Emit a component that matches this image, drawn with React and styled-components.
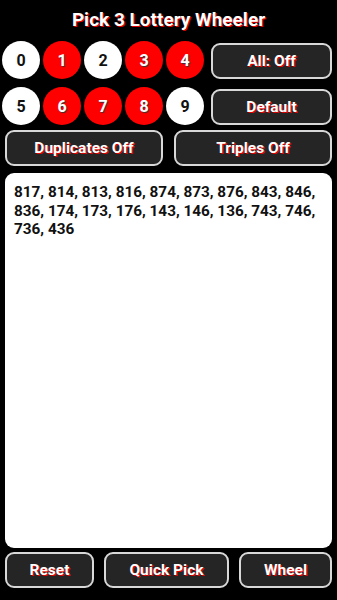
import React from 'react';
import styled, { createGlobalStyle } from 'styled-components';

const GlobalStyle = createGlobalStyle`
  html, body {
    margin: 0;
    padding: 0;
    background: #000;
  }
  body {
    font-family: Roboto, 'Liberation Sans', sans-serif;
  }
`;

const Screen = styled.div`
  width: 337px;
  height: 600px;
  background: #000;
  display: flex;
  flex-direction: column;
  box-sizing: border-box;
  padding: 0 5px 12px 5px;
`;

const Title = styled.h1`
  margin: 0;
  height: 41px;
  line-height: 40px;
  text-align: center;
  font-size: 19px;
  font-weight: 700;
  color: #fff;
  text-shadow: 1px 1px 0 #e00000;
`;

const PickArea = styled.div`
  display: grid;
  grid-template-columns: 202px 1fr;
  column-gap: 7px;
  row-gap: 8px;
  margin-left: -3px;
`;

const BallRow = styled.div`
  display: flex;
  gap: 3px;
  align-items: center;
`;

const Ball = styled.div`
  width: 38px;
  height: 38px;
  border-radius: 50%;
  display: flex;
  align-items: center;
  justify-content: center;
  font-size: 16px;
  font-weight: 700;
  background: ${({ picked }) => (picked ? '#ff0000' : '#fff')};
  color: ${({ picked }) => (picked ? '#fff' : '#111')};
  text-shadow: ${({ picked }) => (picked ? '1px 1px 1px #333' : 'none')};
`;

const Button = styled.button`
  height: 36px;
  box-sizing: border-box;
  border: 2px solid #d8d8d8;
  border-radius: 9px;
  background: #252525;
  color: #fff;
  font-family: Roboto, 'Liberation Sans', sans-serif;
  font-size: 15.5px;
  font-weight: 700;
  text-shadow: 1px 1px 0 #e00000;
  padding: 0;
  cursor: pointer;
`;

const SideButton = styled(Button)`
  align-self: center;
  margin-top: ${({ top }) => top || 0}px;
`;

const OptionRow = styled.div`
  display: grid;
  grid-template-columns: 158px 158px;
  justify-content: space-between;
  margin-top: 5px;
`;

const Results = styled.div`
  flex: 1;
  margin-top: 7px;
  background: #fff;
  border-radius: 9px;
  padding: 10px 9px;
  font-size: 15.3px;
  font-weight: 700;
  line-height: 18.7px;
  color: #111;
`;

const ActionRow = styled.div`
  display: grid;
  grid-template-columns: 89px 125px 93px;
  justify-content: space-between;
  margin-top: 4px;
`;

const rows = [
  [0, 1, 2, 3, 4],
  [5, 6, 7, 8, 9],
];
const picked = [1, 3, 4, 6, 7, 8];

const combos = [
  817, 814, 813, 816, 874, 873, 876, 843, 846, 836, 174, 173, 176, 143, 146,
  136, 743, 746, 736, 436,
];

export default function App() {
  return (
    <Screen>
      <GlobalStyle />
      <Title>Pick 3 Lottery Wheeler</Title>
      <PickArea>
        <BallRow>
          {rows[0].map((n) => (
            <Ball key={n} picked={picked.includes(n)}>
              {n}
            </Ball>
          ))}
        </BallRow>
        <SideButton top={2}>All: Off</SideButton>
        <BallRow>
          {rows[1].map((n) => (
            <Ball key={n} picked={picked.includes(n)}>
              {n}
            </Ball>
          ))}
        </BallRow>
        <SideButton top={2}>Default</SideButton>
      </PickArea>
      <OptionRow>
        <Button>Duplicates Off</Button>
        <Button>Triples Off</Button>
      </OptionRow>
      <Results>{combos.join(', ')}</Results>
      <ActionRow>
        <Button>Reset</Button>
        <Button>Quick Pick</Button>
        <Button>Wheel</Button>
      </ActionRow>
    </Screen>
  );
}
